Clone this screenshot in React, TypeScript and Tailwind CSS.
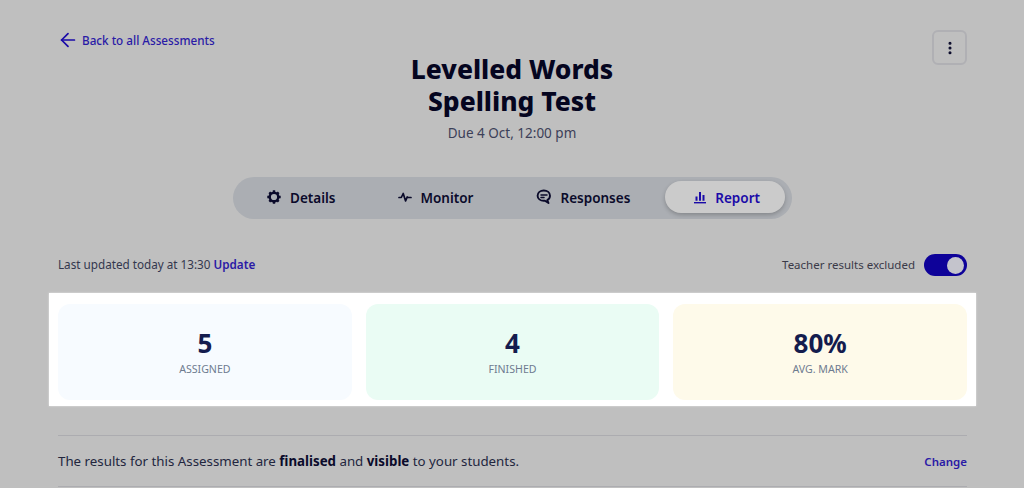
import { ArrowLeft, MoreVertical } from "lucide-react";

function GearIcon() {
  return (
    <svg width="16" height="16" viewBox="0 0 16 16" fill="none" stroke="#0a0a2a">
      <circle cx="8" cy="8" r="4.300" strokeWidth="2.400" />
      <path strokeWidth="2.400" d="M8 1.300v2M8 12.700v2M1.300 8h2M12.700 8h2M3.300 3.300l1.400 1.400M11.300 11.300l1.400 1.400M3.300 12.700l1.400-1.400M11.300 4.700l1.400-1.400" />
    </svg>
  );
}

function PulseIcon() {
  return (
    <svg width="14" height="14" viewBox="0 0 14 14" fill="none" stroke="#0a0a2a" strokeWidth="1.700" strokeLinejoin="round" strokeLinecap="round">
      <path d="M1 7.500h2.300l1.900-4 2.400 7.500 1.600-4 .8 .5h3" />
    </svg>
  );
}

function ChatIcon() {
  return (
    <svg width="16" height="16" viewBox="0 0 16 16" fill="none" stroke="#0a0a2a" strokeLinecap="round" strokeLinejoin="round">
      <path strokeWidth="1.900" d="M7.800 1.500c3.500 0 6.200 2.200 6.200 5.200 0 1.900-1.100 3.400-2.700 4.300l1.200 3-3.600-2.300c-.4 .1-.7 .1-1.100 .1-3.500 0-6.200-2.100-6.200-5.100s2.700-5.200 6.200-5.200z" />
      <path strokeWidth="1.500" d="M5 6h6M5 8.500h3" />
    </svg>
  );
}

function BarsIcon() {
  return (
    <svg width="14" height="14" viewBox="0 0 14 14" fill="none" stroke="#1a0aa8">
      <path strokeWidth="1.400" d="M1 12.700h12" />
      <path strokeWidth="2" d="M3.500 10.800V6.500M7 10.800V2M10.500 10.800V5" />
    </svg>
  );
}

function Tab({ icon, label, active }: { icon: React.ReactNode; label: string; active?: boolean }) {
  return (
    <div
      className={
        "flex h-[32px] flex-none items-center justify-center gap-[8px] rounded-full text-[13.500px] font-semibold " +
        (active
          ? "-ml-[4px] bg-[#cbcbcb] pr-[25px] pl-[28px] text-[#1a0aa8] shadow-[0_2px_4px_rgba(0,0,0,0.22)]"
          : "px-[24px] text-[#0a0a2a]")
      }
    >
      {icon}
      <span className="relative top-[1px]">{label}</span>
    </div>
  );
}

function Stat({ value, label, bg }: { value: string; label: string; bg: string }) {
  return (
    <div className={"flex h-[96px] flex-1 flex-col items-center justify-center rounded-[12px] " + bg}>
      <div className="text-[26px] leading-[32px] font-bold text-[#141c4e]">{value}</div>
      <div className="mt-[2px] text-[10.600px] leading-[16px] text-[#6e7b90]">{label}</div>
    </div>
  );
}

export default function App() {
  return (
    <div
      className="h-[488px] w-[1024px] overflow-hidden bg-[#bfbfbf] pt-[30px] pr-[57px] pl-[58px] text-[#22263e]"
      style={{ fontFamily: '"Noto Sans", sans-serif' }}
    >
      {/* Header */}
      <div className="flex items-start justify-between">
        <div className="-mt-[1px] -ml-[1px] flex w-[200px] items-center gap-[3px] text-[11.700px] leading-[18px] font-medium whitespace-nowrap text-[#2a1aa6]">
          <ArrowLeft size={22} strokeWidth={1.900} color="#1a0aa8" />
          <span>Back to all Assessments</span>
        </div>
        <div className="pt-[23px] text-center">
          <h1 className="text-[26.400px] leading-[32px] font-extrabold text-[#05051f]">
            Levelled Words
            <br />
            Spelling Test
          </h1>
          <p className="mt-[6px] text-[13.500px] leading-[20px] text-[#3c4058]">Due 4 Oct, 12:00 pm</p>
        </div>
        <div className="flex w-[200px] justify-end">
          <div className="flex h-[35px] w-[35px] items-center justify-center rounded-[6px] border-2 border-[#b0b0b4]">
            <MoreVertical size={16} strokeWidth={2.600} color="#0a0a2a" />
          </div>
        </div>
      </div>

      {/* Tabs */}
      <div className="mt-[34px] flex justify-center">
        <div className="flex h-[42px] w-[559px] items-center gap-[15px] rounded-full bg-[#abaeb3] pb-[2px] pl-[9px]">
          <Tab icon={<GearIcon />} label="Details" />
          <Tab icon={<PulseIcon />} label="Monitor" />
          <Tab icon={<ChatIcon />} label="Responses" />
          <Tab icon={<BarsIcon />} label="Report" active />
        </div>
      </div>

      {/* Update row */}
      <div className="mt-[34px] flex h-[24px] items-center justify-between text-[11.700px]">
        <div className="text-[#33374e]">
          Last updated today at 13:30 <span className="font-semibold text-[#2a1aa6]">Update</span>
        </div>
        <div className="flex items-center gap-[9px]">
          <span className="text-[11.500px] text-[#3a3a48]">Teacher results excluded</span>
          <div className="flex h-[22px] w-[43px] items-center justify-end rounded-full bg-[#0e0299] pr-[3px]">
            <div className="h-[17px] w-[17px] rounded-full bg-[#c4c4cc]" />
          </div>
        </div>
      </div>

      {/* Stats */}
      <div className="-mx-[9px] mt-[16px] flex gap-[14px] bg-white px-[9px] pt-[11px] pb-[6px] shadow-[0_0_2px_rgba(255,255,255,0.6)]">
        <Stat value="5" label="ASSIGNED" bg="bg-[#f7fbff]" />
        <Stat value="4" label="FINISHED" bg="bg-[#eafcf4]" />
        <Stat value="80%" label="AVG. MARK" bg="bg-[#fefaea]" />
      </div>

      {/* Status */}
      <div className="mt-[29px] flex h-[52px] items-center justify-between border-y border-[#acacb0] pt-[1px] text-[13.300px]">
        <div className="text-[#22263e]">
          The results for this Assessment are <b className="font-bold text-[#0a0a2a]">finalised</b> and{" "}
          <b className="font-bold text-[#0a0a2a]">visible</b> to your students.
        </div>
        <div className="text-[11.500px] font-semibold text-[#2a1aa6]">Change</div>
      </div>
    </div>
  );
}
